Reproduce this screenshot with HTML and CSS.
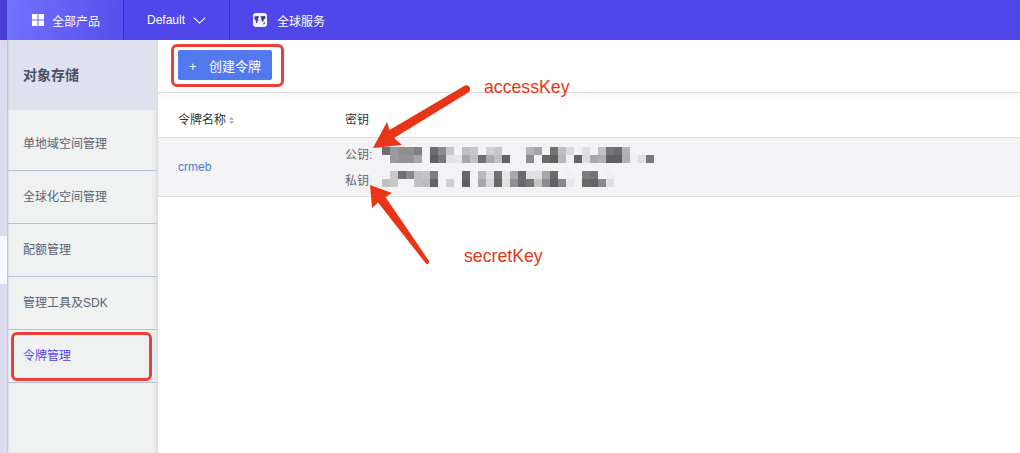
FILE: index.html
```html
<!DOCTYPE html>
<html lang="zh-CN">
<head>
    <meta charset="UTF-8">
    <title>对象存储</title>
    <link rel="stylesheet" href="styles.css">
</head>
<body>

    <header class="topbar">
        <div class="topbar-edge"></div>
        <div class="tab tab-products">
            <svg class="tab-icon" width="12" height="12" viewBox="0 0 12 12"><path d="M0 0h5.5v5.500H0zM6.500 0H12v5.500H6.500zM0 6.500h5.500V12H0zM6.500 6.500H12V12H6.500z" fill="#fff"/></svg>
            <span>全部产品</span>
        </div>
        <div class="tab tab-region">
            <span>Default</span>
            <svg width="13" height="7" viewBox="0 0 13 7"><path d="M.7.7l5.8 5.4L12.300.7" fill="none" stroke="#fff" stroke-width="1.100"/></svg>
        </div>
        <div class="tab tab-global">
            <svg class="globe" width="14" height="14" viewBox="0 0 14 14">
                <rect width="14" height="14" rx="3" fill="#f1f0fd"/>
                <path d="M1.500 3.500l4-.5.300 1.700-1.200.9.800 1.400-.9 1-.3 2.300-1-.3-.4-2.400-1.300-1.600zM7.500 3.300l4.500-.3.500 2.500-1.700.6-.2 1.700-1.100 1.400-.6-1.900-1-.6.800-1.500-.9-.9zM10.500 9.700l1.600-.5-.4 1.800-1.400.5z" fill="#3f3790"/>
            </svg>
            <span>全球服务</span>
        </div>
    </header>

    <div class="layout">
        <div class="strip">
            <div class="strip-gap"></div>
        </div>

        <aside class="sidebar">
            <h2 class="sidebar-title">对象存储</h2>
            <ul class="menu">
                <li class="menu-first">单地域空间管理</li>
                <li>全球化空间管理</li>
                <li>配额管理</li>
                <li>管理工具及SDK</li>
                <li class="menu-active">令牌管理</li>
            </ul>
        </aside>

        <main class="main">
            <div class="toolbar">
                <button class="create-btn"><span class="plus">+</span>创建令牌</button>
            </div>

            <table class="token-table">
                <thead>
                    <tr>
                        <th class="col-name">
                            令牌名称
                            <svg class="sort" width="5" height="7" viewBox="0 0 5 7"><path d="M2.500 0L5 2.800H0zM2.500 7L0 4.200h5z" fill="#aaa"/></svg>
                        </th>
                        <th class="col-key">密钥</th>
                    </tr>
                </thead>
                <tbody>
                    <tr>
                        <td class="col-name"><a class="token-link">crmeb</a></td>
                        <td class="col-key">
                            <div class="key-row">
                                <span class="key-label">公钥:</span>
                                <svg width="272" height="16" viewBox="0 0 272 16" shape-rendering="crispEdges">
                                    <rect x="0" y="0" width="8" height="8" fill="#6e6e70"/>
                                    <rect x="8" y="0" width="8" height="8" fill="#9a9a9c"/>
                                    <rect x="16" y="0" width="16" height="8" fill="#8f8f91"/>
                                    <rect x="32" y="0" width="8" height="8" fill="#808082"/>
                                    <rect x="48" y="0" width="8" height="8" fill="#6c6c6e"/>
                                    <rect x="56" y="0" width="8" height="8" fill="#8c8c8e"/>
                                    <rect x="64" y="0" width="8" height="8" fill="#c8c8ca"/>
                                    <rect x="80" y="0" width="8" height="8" fill="#bebec0"/>
                                    <rect x="88" y="0" width="8" height="8" fill="#c8c8ca"/>
                                    <rect x="104" y="0" width="8" height="8" fill="#d0d0d2"/>
                                    <rect x="112" y="0" width="8" height="8" fill="#c8c8ca"/>
                                    <rect x="144" y="0" width="8" height="8" fill="#b4b4b6"/>
                                    <rect x="152" y="0" width="8" height="8" fill="#a4a4a6"/>
                                    <rect x="168" y="0" width="8" height="8" fill="#707072"/>
                                    <rect x="176" y="0" width="8" height="8" fill="#c0c0c2"/>
                                    <rect x="184" y="0" width="8" height="8" fill="#dcdcde"/>
                                    <rect x="200" y="0" width="8" height="8" fill="#e0e0e2"/>
                                    <rect x="216" y="0" width="8" height="8" fill="#c0c0c2"/>
                                    <rect x="224" y="0" width="8" height="8" fill="#747476"/>
                                    <rect x="232" y="0" width="8" height="8" fill="#6c6c6e"/>
                                    <rect x="240" y="0" width="8" height="8" fill="#b4b4b6"/>

                                    <rect x="8" y="8" width="8" height="8" fill="#9a9a9c"/>
                                    <rect x="16" y="8" width="16" height="8" fill="#949496"/>
                                    <rect x="32" y="8" width="8" height="8" fill="#a8a8aa"/>
                                    <rect x="48" y="8" width="8" height="8" fill="#606062"/>
                                    <rect x="56" y="8" width="8" height="8" fill="#78787a"/>
                                    <rect x="64" y="8" width="8" height="8" fill="#e2e2e4"/>
                                    <rect x="72" y="8" width="8" height="8" fill="#e6e6e8"/>
                                    <rect x="80" y="8" width="8" height="8" fill="#a8a8aa"/>
                                    <rect x="88" y="8" width="8" height="8" fill="#c0c0c2"/>
                                    <rect x="96" y="8" width="8" height="8" fill="#707072"/>
                                    <rect x="104" y="8" width="8" height="8" fill="#aaaaac"/>
                                    <rect x="112" y="8" width="8" height="8" fill="#c0c0c2"/>
                                    <rect x="120" y="8" width="8" height="8" fill="#646466"/>
                                    <rect x="144" y="8" width="8" height="8" fill="#8c8c8e"/>
                                    <rect x="160" y="8" width="8" height="8" fill="#686868"/>
                                    <rect x="168" y="8" width="8" height="8" fill="#606062"/>
                                    <rect x="176" y="8" width="8" height="8" fill="#b8b8ba"/>
                                    <rect x="184" y="8" width="8" height="8" fill="#f0f0f2"/>
                                    <rect x="192" y="8" width="8" height="8" fill="#646466"/>
                                    <rect x="200" y="8" width="8" height="8" fill="#dcdcde"/>
                                    <rect x="208" y="8" width="8" height="8" fill="#a8a8aa"/>
                                    <rect x="216" y="8" width="8" height="8" fill="#b0b0b2"/>
                                    <rect x="224" y="8" width="16" height="8" fill="#606062"/>
                                    <rect x="240" y="8" width="8" height="8" fill="#b0b0b2"/>
                                    <rect x="248" y="8" width="8" height="8" fill="#f0f0f2"/>
                                    <rect x="256" y="8" width="8" height="8" fill="#e0e0e2"/>
                                    <rect x="264" y="8" width="8" height="8" fill="#78787a"/>
                                </svg>
                            </div>
                            <div class="key-row">
                                <span class="key-label">私钥</span>
                                <svg width="272" height="16" viewBox="0 0 272 16" shape-rendering="crispEdges">
                                    <rect x="8" y="0" width="8" height="8" fill="#c8c8ca"/>
                                    <rect x="16" y="0" width="8" height="8" fill="#707072"/>
                                    <rect x="24" y="0" width="8" height="8" fill="#88888a"/>
                                    <rect x="32" y="0" width="8" height="8" fill="#c0c0c2"/>
                                    <rect x="40" y="0" width="8" height="8" fill="#c4c4c6"/>
                                    <rect x="48" y="0" width="8" height="8" fill="#7c7c7e"/>
                                    <rect x="80" y="0" width="8" height="8" fill="#666668"/>
                                    <rect x="96" y="0" width="8" height="8" fill="#b8b8ba"/>
                                    <rect x="104" y="0" width="8" height="8" fill="#e0e0e2"/>
                                    <rect x="112" y="0" width="8" height="8" fill="#707072"/>
                                    <rect x="120" y="0" width="8" height="8" fill="#e6e6e8"/>
                                    <rect x="128" y="0" width="8" height="8" fill="#a8a8aa"/>
                                    <rect x="136" y="0" width="8" height="8" fill="#6a6a6c"/>
                                    <rect x="144" y="0" width="16" height="8" fill="#e0e0e2"/>
                                    <rect x="160" y="0" width="8" height="8" fill="#a8a8aa"/>
                                    <rect x="168" y="0" width="8" height="8" fill="#6a6a6c"/>
                                    <rect x="184" y="0" width="8" height="8" fill="#f0f0f2"/>
                                    <rect x="200" y="0" width="8" height="8" fill="#7c7c7e"/>
                                    <rect x="208" y="0" width="8" height="8" fill="#747476"/>
                                    <rect x="224" y="0" width="8" height="8" fill="#f0f0f2"/>

                                    <rect x="0" y="8" width="8" height="8" fill="#c0c0c2"/>
                                    <rect x="8" y="8" width="8" height="8" fill="#c8c8ca"/>
                                    <rect x="32" y="8" width="8" height="8" fill="#c0c0c2"/>
                                    <rect x="40" y="8" width="8" height="8" fill="#bcbcbe"/>
                                    <rect x="48" y="8" width="8" height="8" fill="#646466"/>
                                    <rect x="64" y="8" width="8" height="8" fill="#d0d0d2"/>
                                    <rect x="80" y="8" width="8" height="8" fill="#606062"/>
                                    <rect x="96" y="8" width="8" height="8" fill="#a8a8aa"/>
                                    <rect x="104" y="8" width="8" height="8" fill="#d8d8da"/>
                                    <rect x="112" y="8" width="8" height="8" fill="#686868"/>
                                    <rect x="120" y="8" width="8" height="8" fill="#e0e0e2"/>
                                    <rect x="128" y="8" width="8" height="8" fill="#909092"/>
                                    <rect x="136" y="8" width="8" height="8" fill="#6a6a6c"/>
                                    <rect x="144" y="8" width="8" height="8" fill="#787878"/>
                                    <rect x="152" y="8" width="8" height="8" fill="#c4c4c6"/>
                                    <rect x="160" y="8" width="8" height="8" fill="#8c8c8e"/>
                                    <rect x="168" y="8" width="8" height="8" fill="#606062"/>
                                    <rect x="176" y="8" width="8" height="8" fill="#88888a"/>
                                    <rect x="184" y="8" width="8" height="8" fill="#e8e8ea"/>
                                    <rect x="200" y="8" width="8" height="8" fill="#686868"/>
                                    <rect x="208" y="8" width="8" height="8" fill="#646466"/>
                                    <rect x="216" y="8" width="8" height="8" fill="#8a8a8c"/>
                                    <rect x="224" y="8" width="8" height="8" fill="#e0e0e2"/>
                                </svg>
                            </div>
                        </td>
                    </tr>
                </tbody>
            </table>
        </main>
    </div>

    <!-- red marks drawn on top of the screenshot -->
    <div class="mark mark-btn"></div>
    <div class="mark mark-menu"></div>
    <span class="note note-access">accessKey</span>
    <span class="note note-secret">secretKey</span>
    <svg class="arrows" width="1020" height="453" viewBox="0 0 1020 453">
        <path d="M373 148L387 122 389.500 130 465 85.500C469 84 472 89 469 92L394 138 402 145z" fill="#e93517"/>
        <path d="M370 185L392 193 385.500 197 429 261C429.500 264 427 265 425.500 263L378 202.500 372 208z" fill="#e93517"/>
    </svg>

</body>
</html>
```

FILE: styles.css
```css
* {
    box-sizing: border-box;
}

body {
    margin: 0;
    height: 453px;
    overflow: hidden;
    position: relative;
    background: #fff;
    font-family: "Liberation Sans", "Noto Sans CJK SC", sans-serif;
    font-size: 12px;
    color: #333;
}

.topbar {
    display: flex;
    height: 40px;
    background: #4f47e9;
    color: #fff;
}

.topbar-edge {
    width: 7px;
    background: #4a3dd6;
}

.tab {
    display: flex;
    align-items: center;
    border-right: 1px solid #3c349f;
}

.tab-products {
    width: 117px;
    padding-left: 25px;
    gap: 8px;
    background: linear-gradient(100deg, #7273fd, #564dec);
}

.tab-region {
    width: 106px;
    padding-left: 23px;
    gap: 8px;
}

.tab-global {
    padding-left: 23px;
    gap: 10px;
    border-right: none;
}

.layout {
    display: flex;
    height: 413px;
}

.strip {
    width: 7px;
    padding-top: 196px;
    background: #dcdaee;
}

.strip-gap {
    height: 48px;
    background: #f8f8ff;
}

.sidebar {
    width: 151px;
    background: #f0f2f2;
    border-right: 1px solid #dddde4;
    box-shadow: inset 2px 0 2px -1px #b9b9c9, inset -6px 0 6px -6px #d4d4d8;
}

.sidebar-title {
    margin: 0;
    height: 70px;
    padding-left: 16px;
    background: #dfe2ee;
    box-shadow: inset 2px 0 2px -1px #b9b9c9;
    font-size: 14px;
    font-weight: bold;
    line-height: 70px;
    color: #4a4f5e;
}

.menu {
    margin: 0;
    padding: 0;
    list-style: none;
}

.menu li {
    height: 53px;
    padding-left: 16px;
    line-height: 41px;
    padding-top: 6px;
    border-bottom: 1px solid #bdbfd4;
    color: #5c6273;
}

.menu .menu-first {
    height: 61px;
    padding-top: 14px;
}

.menu .menu-active {
    color: #4f47e9;
}

.toolbar {
    height: 53px;
    padding: 10px 0 0 20px;
    border-bottom: 1px solid #dcdcdc;
}

.create-btn {
    display: block;
    width: 94px;
    height: 30px;
    padding: 0 0 0 11px;
    border: none;
    border-radius: 2px;
    background: #5379ee;
    color: #fff;
    font: inherit;
    font-size: 13px;
    text-align: left;
}

.plus {
    display: inline-block;
    width: 20px;
}

.main {
    flex: 1;
}

.token-table {
    width: 100%;
    border-collapse: separate;
    border-spacing: 0;
    table-layout: fixed;
}

.token-table th {
    height: 45px;
    padding: 7px 0 0;
    border-bottom: 1px solid #dcdcdc;
    background: linear-gradient(#f8f8f8, #fff 12px);
    font-weight: normal;
    text-align: left;
}

.token-table .col-name {
    width: 187px;
    padding-left: 20px;
}

.token-table td {
    height: 59px;
    padding: 0;
    border-bottom: 1px solid #dcdcdc;
    background: #f3f3f6;
}

.token-link {
    color: #4a7bc8;
}

.key-row {
    display: flex;
    align-items: center;
    height: 16px;
    color: #666;
}

.key-row + .key-row {
    margin-top: 8px;
}

.key-label {
    width: 37px;
    flex: none;
}

.key-row:first-child .key-label {
    margin-top: -3px;
}

/* annotations */
.mark {
    position: absolute;
    border: 3px solid #eb3f3a;
    border-radius: 6px;
}

.mark-btn {
    left: 171px;
    top: 44px;
    width: 113px;
    height: 43px;
}

.mark-menu {
    left: 11px;
    top: 332px;
    width: 141px;
    height: 49px;
}

.note {
    position: absolute;
    font-size: 17.7px;
    line-height: 20px;
    color: #e93517;
}

.note-access {
    left: 484px;
    top: 77px;
}

.note-secret {
    left: 464px;
    top: 246px;
}

.arrows {
    position: absolute;
    left: 0;
    top: 0;
}
```
